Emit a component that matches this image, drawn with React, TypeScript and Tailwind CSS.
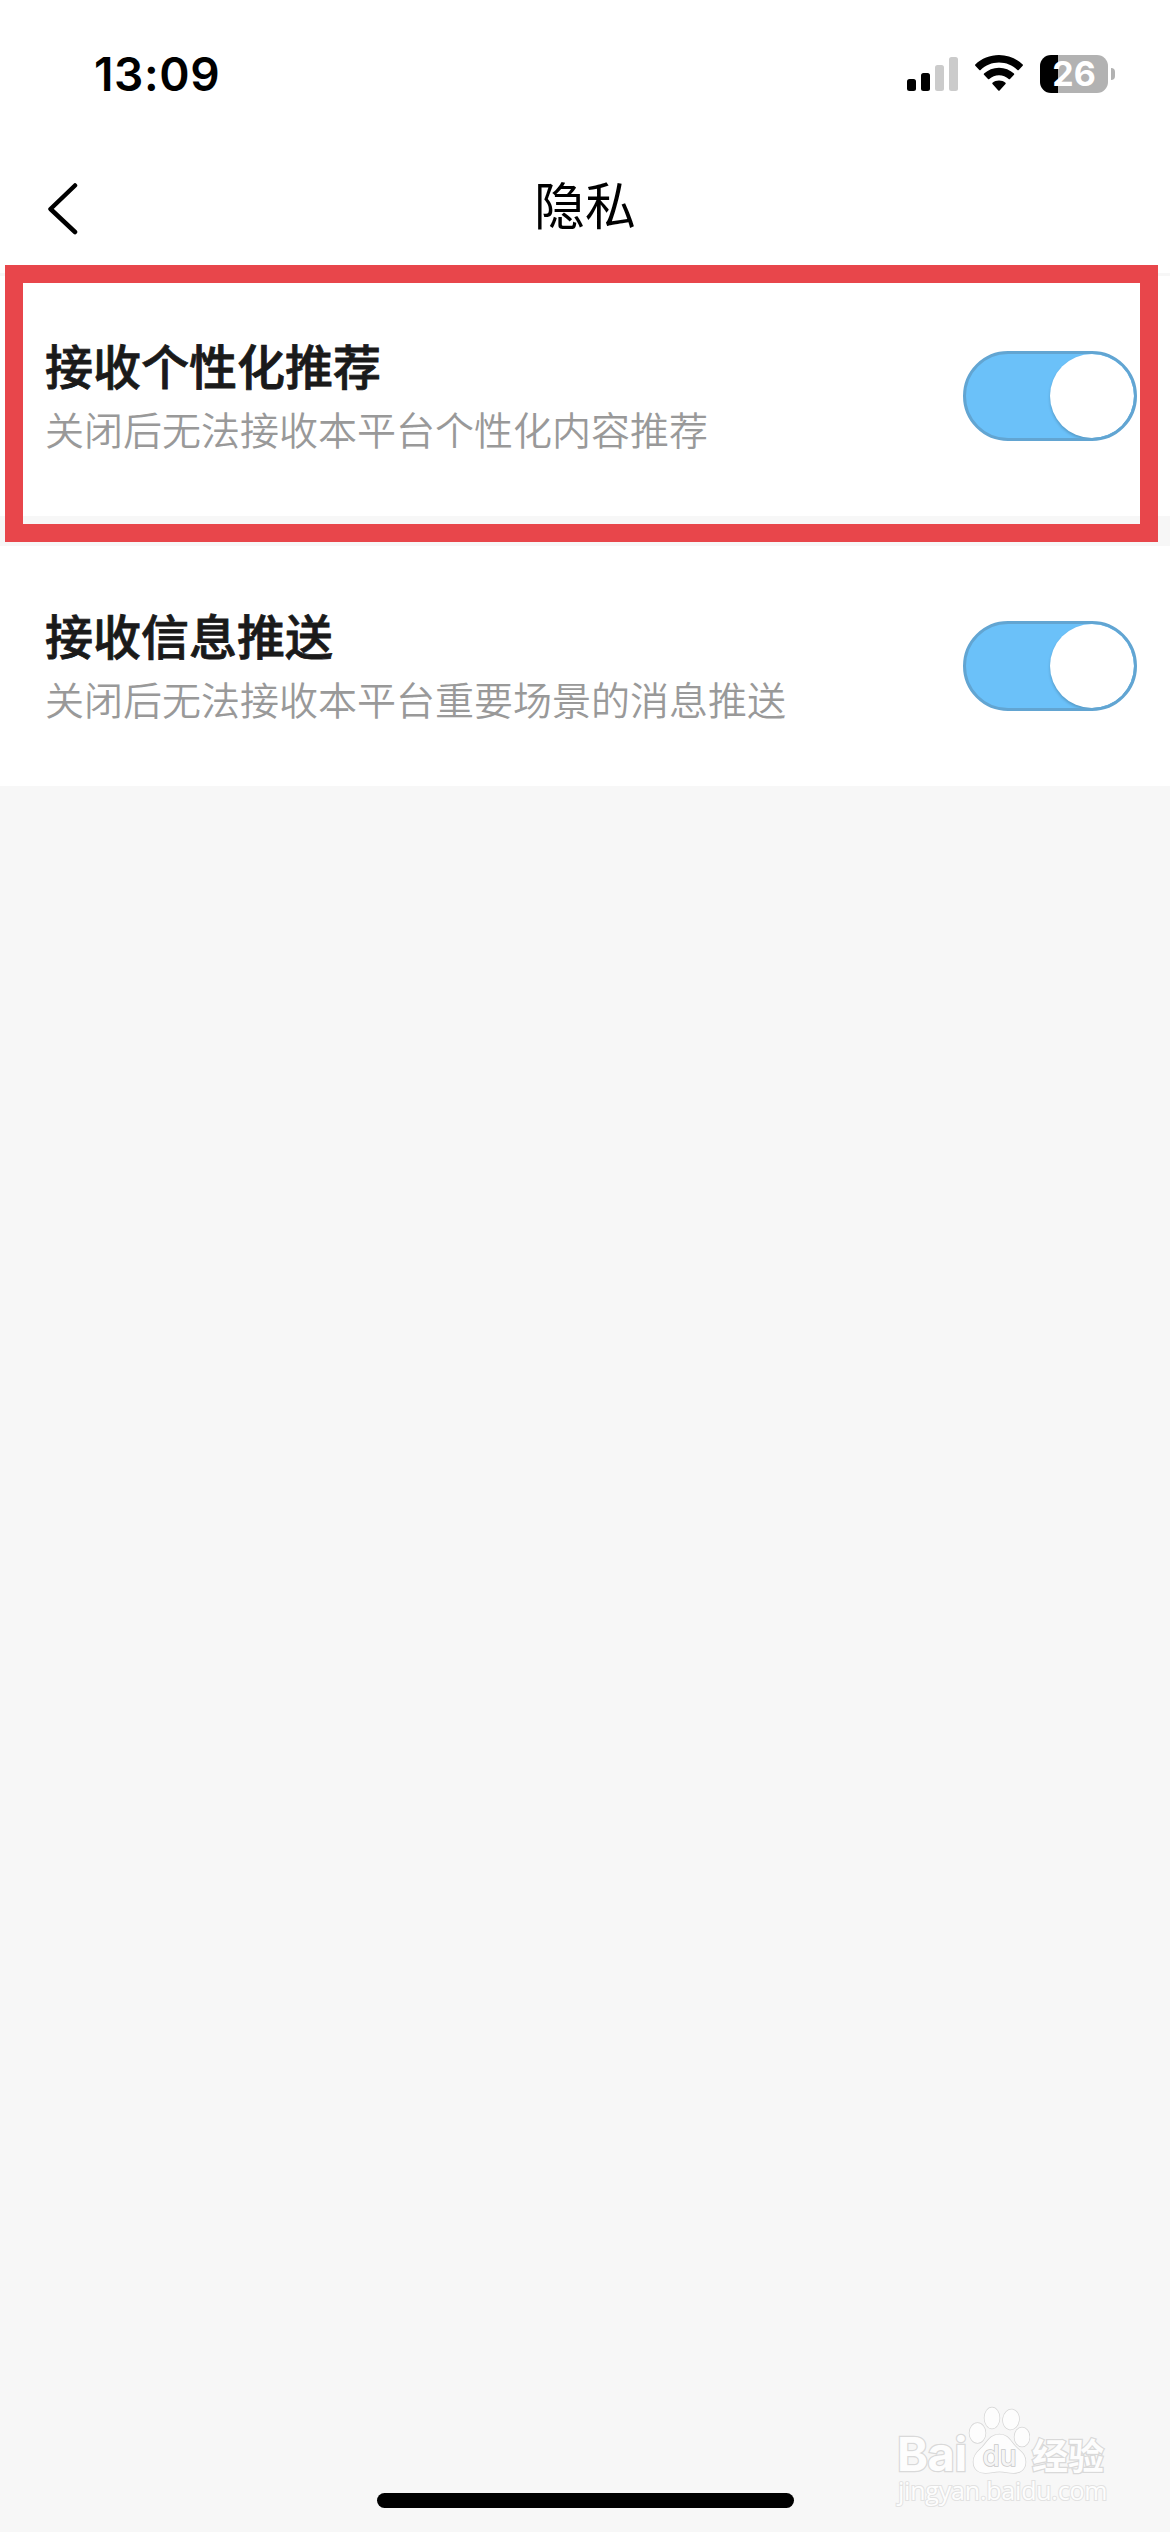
import { useState } from "react";

const SETTINGS = [
  {
    id: "recommend",
    title: "接收个性化推荐",
    desc: "关闭后无法接收本平台个性化内容推荐",
  },
  {
    id: "push",
    title: "接收信息推送",
    desc: "关闭后无法接收本平台重要场景的消息推送",
  },
];

function StatusBar() {
  return (
    <div className="flex h-[150px] items-start justify-between pl-[94px] pr-[55px] font-['Inter',sans-serif]">
      <span className="mt-[47px] text-[46px] font-semibold leading-[55px] tracking-[0.6px]">13:09</span>

      <div className="mt-[55px] flex items-start">
        {/* signal */}
        <svg width="52" height="36" viewBox="0 0 52 36">
          <rect x="0" y="24" width="9" height="12" rx="2.5" fill="#000" />
          <rect x="14" y="18" width="9" height="18" rx="2.5" fill="#000" />
          <rect x="28" y="10" width="9" height="26" rx="2.5" fill="#cbcbcb" />
          <rect x="42" y="2" width="9" height="34" rx="2.5" fill="#cbcbcb" />
        </svg>

        {/* wifi */}
        <svg className="ml-4" width="48" height="36" viewBox="0 0 48 36">
          <path d="M24 0C33 0 41.5 3.5 47.7 9.4c.4.4.4.9 0 1.3l-4 4.2c-.4.4-.9.4-1.3 0C37.500 10.200 31 7.500 24 7.500S10.500 10.200 5.600 14.900c-.4.4-.9.4-1.300 0l-4-4.200c-.4-.4-.4-.9 0-1.300C6.500 3.500 15 0 24 0z" />
          <path d="M24 12.700c5.800 0 11 2.200 15 5.800.4.4.4.9 0 1.300l-4 4.100c-.4.4-.9.4-1.300.1-2.600-2.400-6-3.800-9.700-3.800s-7.100 1.400-9.700 3.800c-.4.3-.9.3-1.300-.1l-4-4.100c-.4-.4-.4-.9 0-1.300 4-3.600 9.200-5.800 15-5.800z" />
          <path d="M24 25.400c2.500 0 4.700.8 6.500 2.300.4.3.4.9 0 1.300l-5.900 6.500c-.4.4-.9.4-1.300 0L17.500 29c-.4-.4-.4-1 0-1.300 1.800-1.500 4-2.300 6.500-2.300z" />
        </svg>

        {/* battery */}
        <div className="ml-[17px] flex items-center">
          <div className="flex h-[38px] w-[68px] items-center justify-center rounded-[11px] bg-[linear-gradient(90deg,#000_18px,#b2b2b2_18px)] text-[34px] font-bold leading-none text-white">
            26
          </div>
          <div className="ml-[3px] h-3 w-1 rounded-r-full bg-[#b2b2b2]" />
        </div>
      </div>
    </div>
  );
}

function NavBar() {
  return (
    <header className="grid h-[123px] grid-cols-3 items-start">
      <button type="button" aria-label="返回" className="ml-[46px] mt-[33px] w-[34px]">
        <svg width="34" height="52" viewBox="0 0 34 52" fill="none">
          <path d="M29 2.500 4.500 26 29 49" stroke="#000" strokeWidth="4.500" strokeLinecap="round" strokeLinejoin="round" />
        </svg>
      </button>
      <h1 className="mt-[16px] text-center text-[51px] leading-[74px]">隐私</h1>
    </header>
  );
}

function Toggle({ checked, onChange }: { checked: boolean; onChange: () => void }) {
  return (
    <button
      type="button"
      role="switch"
      aria-checked={checked}
      onClick={onChange}
      className={`flex h-[90px] w-[174px] shrink-0 overflow-hidden rounded-full border-3 ${
        checked ? "justify-end border-[#62a5d2] bg-[#6bc1f9]" : "justify-start border-gray-300 bg-gray-200"
      }`}
    >
      <span className="size-[84px] rounded-full bg-white shadow-[0_2px_3px_rgba(0,0,0,0.2)]" />
    </button>
  );
}

function PawIcon() {
  return (
    <svg width="62" height="68" viewBox="0 0 62 68" fill="#fdfdfd" stroke="#d6d6d6" strokeWidth="1.500">
      <ellipse cx="9.500" cy="27" rx="8" ry="10" />
      <ellipse cx="24" cy="12" rx="7.500" ry="10.500" />
      <ellipse cx="43" cy="13.500" rx="8" ry="10" transform="rotate(8 43 13.500)" />
      <ellipse cx="54" cy="31" rx="7.500" ry="9.500" />
      <path d="M31.500 28.500c-9 0-12 7-17 12.500-5 5-9 8-9 15 0 8 6 11 12 11 5 0 9-1.500 14-1.500s9 1.500 14 1.500c7 0 12-4 12-11 0-8-5-10.500-10-15.500-5-5-7-12-16-12z" />
      <text x="31.500" y="60" textAnchor="middle" fontFamily="Inter, sans-serif" fontSize="28" fontWeight="500" fill="#f5f5f5" stroke="#c8c8c8">
        du
      </text>
    </svg>
  );
}

function Watermark() {
  return (
    <div className="absolute left-[897px] top-[2406px] text-[#fdfdfd] [paint-order:stroke_fill]">
      <div className="flex h-[68px] items-end [-webkit-text-stroke:2.5px_#d9d9d9]">
        <span className="w-[71px] font-['Inter',sans-serif] text-[47px] font-bold leading-[40px] tracking-[-0.5px]">Bai</span>
        <PawIcon />
        <span className="ml-[2px] text-[36px] font-bold leading-[40px]">经验</span>
      </div>
      <div className="mt-[3px] pl-px font-['Open_Sans',sans-serif] text-[25px] leading-[26px] tracking-[-0.2px] [-webkit-text-stroke:2px_#e2e2e2]">
        jingyan.baidu.com
      </div>
    </div>
  );
}

export default function App() {
  const [enabled, setEnabled] = useState<Record<string, boolean>>({ recommend: true, push: true });

  const toggle = (id: string) => {
    setEnabled((prev) => ({ ...prev, [id]: !prev[id] }));
  };

  return (
    <div className="relative flex h-[2532px] w-[1170px] flex-col overflow-hidden bg-[#f7f7f7] font-['Noto_Sans_CJK_SC',sans-serif] text-black">
      <div className="bg-white">
        <StatusBar />
        <NavBar />
      </div>

      <main className="mt-[3px] flex flex-1 flex-col gap-[30px]">
        {SETTINGS.map((item) => (
          <section key={item.id} className="flex h-[240px] items-center justify-between bg-white pl-[45px] pr-[33px]">
            <div className="pb-[5px]">
              <h2 className="text-[48px] font-medium leading-[68px] text-[#1a1a1a] [-webkit-text-stroke:0.8px_#1a1a1a]">
                {item.title}
              </h2>
              <p className="text-[39px] font-[350] leading-[60px] text-[#999]">{item.desc}</p>
            </div>
            <Toggle checked={enabled[item.id]} onChange={() => toggle(item.id)} />
          </section>
        ))}
      </main>

      {/* home indicator */}
      <div className="mb-6 h-[15px] w-[417px] self-center rounded-full bg-black" />

      {/* highlight frame over the first row */}
      <div className="pointer-events-none absolute left-[5px] top-[265px] h-[277px] w-[1153px] border-[18px] border-[#e8464b]" />
      <Watermark />
    </div>
  );
}
